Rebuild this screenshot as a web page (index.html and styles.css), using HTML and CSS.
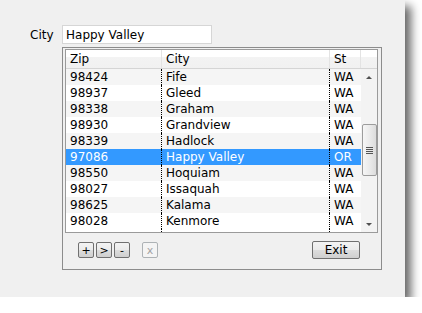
FILE: index.html
```html
<!DOCTYPE html>
<html lang="en">
<head>
<meta charset="UTF-8">
<title>City lookup</title>
<link rel="stylesheet" href="styles.css">
</head>
<body>
<div class="window">
  <div class="field-row">
    <label class="field-label">City</label>
    <div class="field-input">Happy Valley</div>
  </div>
  <div class="group">
    <div class="grid">
      <div class="grid-head">
        <div class="hcell zip">Zip</div>
        <div class="hcell city">City</div>
        <div class="hcell st">St</div>
        <div class="hcell corner"></div>
      </div>
      <div class="grid-body">
        <div class="rows">
          <div class="row odd"><div class="cell zip">98424</div><div class="cell city">Fife</div><div class="cell st">WA</div></div>
          <div class="row"><div class="cell zip">98937</div><div class="cell city">Gleed</div><div class="cell st">WA</div></div>
          <div class="row odd"><div class="cell zip">98338</div><div class="cell city">Graham</div><div class="cell st">WA</div></div>
          <div class="row"><div class="cell zip">98930</div><div class="cell city">Grandview</div><div class="cell st">WA</div></div>
          <div class="row odd"><div class="cell zip">98339</div><div class="cell city">Hadlock</div><div class="cell st">WA</div></div>
          <div class="row selected"><div class="cell zip">97086</div><div class="cell city">Happy Valley</div><div class="cell st">OR</div></div>
          <div class="row odd"><div class="cell zip">98550</div><div class="cell city">Hoquiam</div><div class="cell st">WA</div></div>
          <div class="row"><div class="cell zip">98027</div><div class="cell city">Issaquah</div><div class="cell st">WA</div></div>
          <div class="row odd"><div class="cell zip">98625</div><div class="cell city">Kalama</div><div class="cell st">WA</div></div>
          <div class="row"><div class="cell zip">98028</div><div class="cell city">Kenmore</div><div class="cell st">WA</div></div>
          <div class="rows-fill"><div class="cell zip"></div><div class="cell city"></div><div class="cell st"></div></div>
        </div>
        <div class="scrollbar">
          <div class="arrow up"></div>
          <div class="track">
            <div class="thumb"><span class="grip"></span></div>
          </div>
          <div class="arrow down"></div>
        </div>
      </div>
    </div>
    <div class="toolbar">
      <div class="tools">
        <button class="mini">+</button>
        <button class="mini">&gt;</button>
        <button class="mini">-</button>
        <button class="mini off">x</button>
      </div>
      <button class="exit">Exit</button>
    </div>
  </div>
</div>
</body>
</html>
```

FILE: styles.css
```css
*{ padding:0; margin:0; box-sizing:border-box; }
body{
  background:#fff;
  font-family:"DejaVu Sans", Verdana, sans-serif;
  font-size:12px;
  color:#000;
}
.window{
  width:405px;
  height:297px;
  background:#f0f0f0;
  padding:25px 0 0 30px;
  box-shadow:6px 6px 9px rgba(0,0,0,.6);
}
.field-row{
  display:flex;
  align-items:center;
  gap:9px;
  height:19px;
}
.field-label{
  width:23px;
  line-height:17px;
  padding-top:2px;
}
.field-input{
  width:150px;
  height:19px;
  background:#fff;
  border:1px solid #d6d6d6;
  padding:1px 0 0 3px;
  line-height:16px;
}
.group{
  margin:3px 0 0 32px;
  width:320px;
  height:223px;
  border:1px solid #8c8c8c;
  padding:1px 3px 0 2px;
}
.grid{
  width:313px;
  height:184px;
  border:1px solid #9a9a9a;
  background:#fff;
}
.grid-head{
  display:flex;
  height:19px;
  border-bottom:1px solid #d5d5d5;
  background:linear-gradient(#fff 0, #fff 40%, #f3f3f3 41%, #f1f1f1 100%);
}
.hcell{
  line-height:17px;
  padding:1px 0 0 4px;
  border-right:1px solid #e3e3e3;
}
.zip{ width:96px; }
.city{ width:168px; }
.st{ width:31px; }
.hcell.corner{ flex:1; border-right:0; }
.grid-body{
  display:flex;
  height:163px;
}
.rows{
  width:295px;
}
.row, .rows-fill{
  display:flex;
  height:16px;
  line-height:16px;
}
.rows-fill{ height:3px; }
.row.odd{ background:#f5f5f5; }
.row.selected{ background:#3399ff; color:#fff; }
.cell{
  padding:1px 0 0 4px;
  line-height:15px;
  white-space:nowrap;
}
.cell.zip, .cell.city{
  border-right:1px dotted #000;
}
.scrollbar{
  width:16px;
  display:flex;
  flex-direction:column;
  background:#f3f3f3;
}
.arrow{
  height:16px;
  display:flex;
  align-items:center;
  justify-content:center;
}
.arrow::after{
  content:"";
  border-left:3px solid transparent;
  border-right:3px solid transparent;
}
.arrow.up::after{ border-bottom:3px solid #505050; }
.arrow.down::after{ border-top:3px solid #505050; }
.track{
  flex:1;
  padding-top:39px;
}
.thumb{
  height:52px;
  margin-left:1px;
  border:1px solid #9c9c9c;
  border-radius:2px;
  background:linear-gradient(90deg, #f6f6f6, #e8e8e8 60%, #dcdcdc);
  display:flex;
  align-items:center;
  justify-content:center;
}
.grip{
  width:7px;
  height:7px;
  background:repeating-linear-gradient(#555 0, #555 1px, transparent 1px, transparent 2px);
}
.toolbar{
  display:flex;
  justify-content:space-between;
  align-items:center;
  padding:8px 18px 0 13px;
}
.tools{
  display:flex;
  gap:2px;
}
button{
  font-family:"DejaVu Sans", Verdana, sans-serif;
  color:#000;
  border:1px solid #707070;
  border-radius:2px;
  background:linear-gradient(#f3f3f3 0, #ebebeb 50%, #dddddd 51%, #cfcfcf 100%);
}
.mini{
  width:16px;
  height:16px;
  font-size:11px;
  line-height:13px;
}
.mini.off{
  margin-left:10px;
  color:#a3a3a3;
  border-color:#adb2b5;
  background:#f4f4f4;
}
.exit{
  width:48px;
  height:18px;
  font-size:12px;
  line-height:15px;
}
```
